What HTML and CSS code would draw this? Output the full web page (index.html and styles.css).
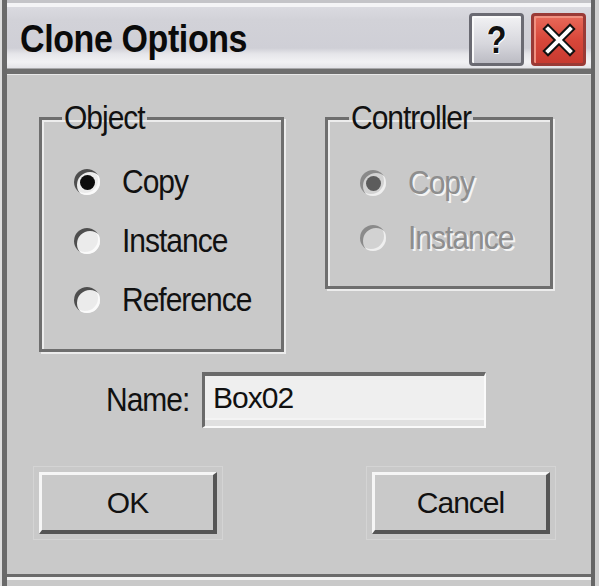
FILE: index.html
```html
<!DOCTYPE html>
<html>
<head>
<meta charset="utf-8">
<link rel="stylesheet" href="styles.css">
</head>
<body>
<div class="window">
  <div class="titlebar">
    <span class="title">Clone Options</span>
    <div class="tb-buttons">
      <div class="tb-btn help"><span class="q">?</span></div>
      <div class="tb-btn close">
        <svg width="40" height="40" viewBox="0 0 40 40">
          <path d="M9 9 L31 31 M31 9 L9 31" stroke="#111" stroke-width="8" stroke-linecap="square"/>
          <path d="M9 9 L31 31 M31 9 L9 31" stroke="#fff" stroke-width="4" stroke-linecap="square"/>
        </svg>
      </div>
    </div>
  </div>
  <div class="client">
    <div class="groups">
      <fieldset class="group obj">
        <legend>Object</legend>
        <div class="radios">
          <div class="row"><span class="radio on"></span><span class="lbl">Copy</span></div>
          <div class="row"><span class="radio"></span><span class="lbl">Instance</span></div>
          <div class="row"><span class="radio"></span><span class="lbl">Reference</span></div>
        </div>
      </fieldset>
      <fieldset class="group ctrl">
        <legend>Controller</legend>
        <div class="radios">
          <div class="row dis"><span class="radio on"></span><span class="lbl">Copy</span></div>
          <div class="row dis"><span class="radio"></span><span class="lbl">Instance</span></div>
        </div>
      </fieldset>
    </div>
    <div class="name-row">
      <span class="name-lbl">Name:</span>
      <div class="input">Box02</div>
    </div>
    <div class="btn-row">
      <div class="btn">OK</div>
      <div class="btn">Cancel</div>
    </div>
  </div>
</div>
</body>
</html>
```

FILE: styles.css
```css
html, body {
  margin: 0;
  padding: 0;
  background: #c8c8c8;
}
.window {
  width: 599px;
  height: 586px;
  box-sizing: border-box;
  background: #c9c9c9;
  position: relative;
  overflow: hidden;
  font-family: "Liberation Sans", Arial, sans-serif;
  color: #111;
  box-shadow:
    inset 2px 0 0 #dedede,
    inset 7px 0 0 #6a6a6a,
    inset -4px 0 0 #d0d0d0,
    inset -8px 0 0 #666,
    inset 0 -6px 0 #c9c9c9,
    inset 0 -9px 0 #f2f2f2,
    inset 0 -12px 0 #6a6a6a;
  display: flex;
  flex-direction: column;
}
.titlebar {
  margin-left: 7px;
  margin-right: 8px;
  height: 75px;
  box-sizing: border-box;
  display: flex;
  align-items: flex-start;
  justify-content: space-between;
  background: linear-gradient(to bottom,
    #c4c4c8 0px, #c4c4c8 3px,
    #f4f4f6 3px, #f4f4f6 7px,
    #dadae0 7px, #d2d2d8 20px,
    #cfcfd6 48px, #e6e6ea 54px,
    #f2f2f4 62px, #e4e4e8 68px,
    #6e6e6e 69px, #6e6e6e 74px,
    #e8e8e8 74px);
}
.title {
  font-weight: bold;
  font-size: 34px;
  letter-spacing: -0.4px;
  line-height: 34px;
  margin-top: 24px;
  margin-left: 13px;
  transform: scaleY(1.12);
  transform-origin: left bottom;
  color: #0a0a0a;
}
.tb-buttons {
  display: flex;
  gap: 7px;
  margin-top: 13px;
  margin-right: 5px;
}
.tb-btn {
  width: 55px;
  height: 53px;
  box-sizing: border-box;
  border-radius: 4px;
  display: flex;
  align-items: center;
  justify-content: center;
}
.help {
  border: 3px solid #6a6a72;
  background: linear-gradient(to bottom, #f2f2f4, #d6d6dc 60%, #bcbcc4);
  box-shadow: inset 2px 2px 0 #fafafa;
}
.q {
  font-size: 38px;
  font-weight: bold;
  color: #111;
  text-shadow: 1px 1px 0 #fff, -1px 0 0 #fff;
  line-height: 1;
  transform: scaleX(0.85);
}
.close {
  border: 3px solid #9a3a36;
  background: linear-gradient(to bottom, #e86a5a, #d8473a 50%, #c83a30);
  box-shadow: inset 2px 2px 0 #f09080;
}
.client {
  flex: 1;
  margin-left: 7px;
  margin-right: 8px;
  padding-left: 32px;
  padding-top: 27px;
  display: flex;
  flex-direction: column;
}
.groups {
  display: flex;
  gap: 41px;
  align-items: flex-start;
}
.group {
  margin: 0;
  box-sizing: border-box;
  border: 3px solid #6e6e6e;
  box-shadow: inset 2px 2px 0 #ececec, 2px 2px 0 #ececec;
  padding: 0;
  min-width: 0;
}
.obj {
  width: 245px;
  height: 250px;
}
.ctrl {
  width: 228px;
  height: 187px;
}
.group legend {
  font-size: 30px;
  line-height: 32px;
  letter-spacing: -1px;
  padding: 0 2px;
  margin-left: 20px;
  transform: scaleY(1.1);
}
.ctrl legend {
  margin-left: 21px;
}
.radios {
  display: flex;
  flex-direction: column;
  gap: 29px;
  padding-top: 33px;
  padding-left: 32px;
}
.ctrl .radios {
  padding-top: 34px;
  padding-left: 32px;
  gap: 25px;
}
.row {
  display: flex;
  align-items: center;
  height: 30px;
}
.radio {
  width: 26px;
  height: 26px;
  border-radius: 50%;
  background: #ebebeb;
  box-shadow: inset 3px 3px 0 #4e4e4e, inset -2px -2px 0 #fafafa;
  position: relative;
  flex: none;
}
.radio.on::after {
  content: "";
  position: absolute;
  left: 6px;
  top: 6px;
  width: 15px;
  height: 15px;
  border-radius: 50%;
  background: #0c0c0c;
}
.lbl {
  font-size: 30px;
  letter-spacing: -1px;
  margin-left: 22px;
  transform: scaleY(1.1);
  line-height: 30px;
}
.dis .lbl {
  color: #8e8e8e;
  text-shadow: 2px 2px 0 #f4f4f4;
}
.dis .radio {
  background: #d2d2d2;
  box-shadow: inset 3px 3px 0 #8a8a8a, inset -2px -2px 0 #efefef;
}
.dis .radio.on::after {
  background: #5c5c5c;
}
.name-row {
  display: flex;
  align-items: center;
  margin-top: 20px;
  margin-left: 67px;
}
.name-lbl {
  font-size: 30px;
  letter-spacing: -1px;
  transform: scaleY(1.1);
  width: 96px;
}
.input {
  width: 284px;
  height: 56px;
  box-sizing: border-box;
  background: #efefef;
  border-top: 4px solid #6a6a6a;
  border-left: 3px solid #6a6a6a;
  border-bottom: 2px solid #fafafa;
  border-right: 2px solid #fafafa;
  box-shadow: inset 0 -6px 0 #e0e0e0, inset 0 -8px 0 #f4f4f4;
  font-size: 30px;
  letter-spacing: -1px;
  padding-left: 8px;
  padding-top: 6px;
  line-height: 32px;
}
.btn-row {
  display: flex;
  justify-content: space-between;
  width: 511px;
  margin-top: 44px;
}
.btn {
  width: 178px;
  height: 62px;
  box-sizing: border-box;
  border-top: 3px solid #f6f6f6;
  border-left: 3px solid #f6f6f6;
  border-right: 4px solid #555;
  border-bottom: 4px solid #555;
  display: flex;
  align-items: center;
  justify-content: center;
  font-size: 30px;
  letter-spacing: -1px;
  line-height: 30px;
  outline: 1px solid #d4d4d4;
  outline-offset: 5px;
}
```
